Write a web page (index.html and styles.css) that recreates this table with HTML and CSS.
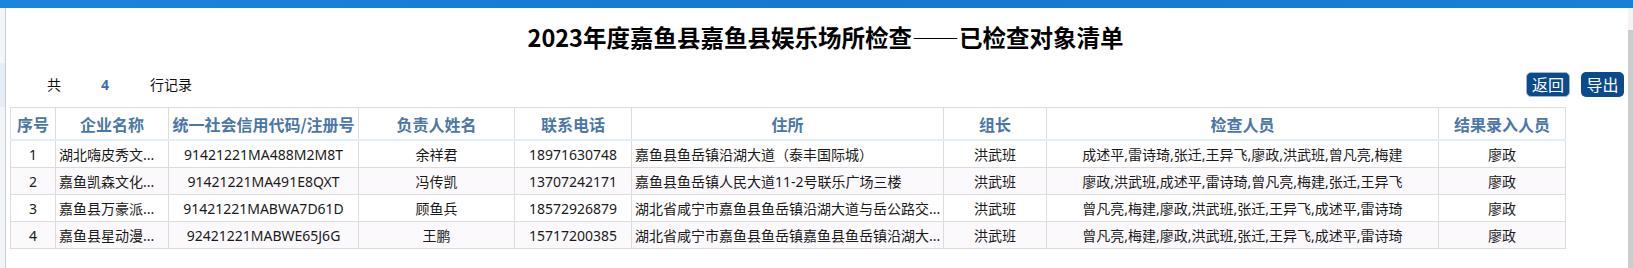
FILE: index.html
```html
<!DOCTYPE html>
<html lang="zh-CN">
<head>
<meta charset="utf-8">
<title>已检查对象清单</title>
<link rel="stylesheet" href="styles.css">
</head>
<body>
<div class="topbar"></div>
<div class="frame">
  <div class="leftrail"><div class="rail-hl"></div></div>
  <div class="main">
    <h1 class="title">2023年度嘉鱼县嘉鱼县娱乐场所检查——已检查对象清单</h1>
    <div class="toolbar">
      <div class="count"><span class="c1">共</span><span class="num">4</span><span class="c2">行记录</span></div>
      <div class="actions"><button class="btn btn-focus">返回</button><button class="btn">导出</button></div>
    </div>
    <table class="grid">
      <colgroup>
        <col class="w-no"><col class="w-name"><col class="w-code"><col class="w-person"><col class="w-tel"><col class="w-addr"><col class="w-lead"><col class="w-insp"><col class="w-rec">
      </colgroup>
      <thead>
        <tr><th>序号</th><th>企业名称</th><th>统一社会信用代码/注册号</th><th>负责人姓名</th><th>联系电话</th><th>住所</th><th>组长</th><th>检查人员</th><th>结果录入人员</th></tr>
      </thead>
      <tbody>
        <tr><td>1</td><td class="left">湖北嗨皮秀文...</td><td>91421221MA488M2M8T</td><td>余祥君</td><td>18971630748</td><td class="left">嘉鱼县鱼岳镇沿湖大道（泰丰国际城）</td><td>洪武班</td><td>成述平,雷诗琦,张迁,王异飞,廖政,洪武班,曾凡亮,梅建</td><td>廖政</td></tr>
        <tr class="alt"><td>2</td><td class="left">嘉鱼凯森文化...</td><td>91421221MA491E8QXT</td><td>冯传凯</td><td>13707242171</td><td class="left">嘉鱼县鱼岳镇人民大道11-2号联乐广场三楼</td><td>洪武班</td><td>廖政,洪武班,成述平,雷诗琦,曾凡亮,梅建,张迁,王异飞</td><td>廖政</td></tr>
        <tr><td>3</td><td class="left">嘉鱼县万豪派...</td><td>91421221MABWA7D61D</td><td>顾鱼兵</td><td>18572926879</td><td class="left">湖北省咸宁市嘉鱼县鱼岳镇沿湖大道与岳公路交...</td><td>洪武班</td><td>曾凡亮,梅建,廖政,洪武班,张迁,王异飞,成述平,雷诗琦</td><td>廖政</td></tr>
        <tr class="alt"><td>4</td><td class="left">嘉鱼县星动漫...</td><td>92421221MABWE65J6G</td><td>王鹏</td><td>15717200385</td><td class="left">湖北省咸宁市嘉鱼县鱼岳镇嘉鱼县鱼岳镇沿湖大...</td><td>洪武班</td><td>曾凡亮,梅建,廖政,洪武班,张迁,王异飞,成述平,雷诗琦</td><td>廖政</td></tr>
      </tbody>
    </table>
  </div>
  <div class="scrollbar"><div class="sb-top"></div><div class="sb-thumb"></div></div>
</div>
</body>
</html>
```

FILE: styles.css
```css
html, body {
  margin: 0;
  padding: 0;
  background: #ffffff;
  overflow: hidden;
}
body {
  font-family: "Noto Sans", "Noto Sans CJK SC", sans-serif;
  color: #1f1f1f;
}
.topbar {
  height: 8px;
  background: linear-gradient(90deg, #1d84dc 0%, #1479cf 50%, #1a80d4 100%);
}
.frame {
  display: flex;
  height: 260px;
}
.leftrail {
  width: 5px;
  background: #f3f5f8;
  border-right: 1px solid #c6ccd5;
  display: flex;
  flex-direction: column;
}
.rail-hl {
  margin-top: 55px;
  height: 44px;
  background: #e5edf7;
}
.main {
  flex: 1;
  padding: 0 4px;
  min-width: 0;
}
.title {
  margin: 0;
  padding: 17px 0 23px 17px;
  height: 24px;
  line-height: 24px;
  font-size: 23.5px;
  font-weight: 700;
  text-align: center;
  color: #000000;
  font-family: "Noto Sans CJK SC", sans-serif;
}
.toolbar {
  display: flex;
  justify-content: space-between;
  align-items: flex-start;
  height: 35px;
}
.count {
  margin-top: 5px;
  font-size: 14px;
  line-height: 14px;
  font-family: "Noto Sans CJK SC", sans-serif;
  color: #111;
}
.c1 { margin-left: 37px; }
.num {
  margin-left: 40px;
  font-weight: 700;
  color: #3b6fb0;
  font-family: "Noto Sans", sans-serif;
}
.c2 { margin-left: 41px; }
.actions {
  display: flex;
  gap: 11px;
}
.btn {
  height: 25px;
  width: 43px;
  padding: 0;
  border: none;
  border-radius: 5px;
  background: #0b4a8d;
  color: #ffffff;
  font-size: 16px;
  line-height: 25px;
  font-family: "Noto Sans CJK SC", sans-serif;
}
.btn-focus {
  width: 44px;
  border: 1px solid #9fb5d1;
  line-height: 23px;
}
.grid {
  width: 1555px;
  table-layout: fixed;
  border-collapse: collapse;
  font-size: 14px;
}
.w-no { width: 45px; }
.w-name { width: 113px; }
.w-code { width: 190px; }
.w-person { width: 156px; }
.w-tel { width: 117px; }
.w-addr { width: 312px; }
.w-lead { width: 103px; }
.w-insp { width: 392px; }
.w-rec { width: 127px; }
.grid th {
  height: 31px;
  padding: 0;
  border: 1px solid #dcdcdc;
  border-bottom: 2px solid #e0edfa;
  font-size: 16px;
  font-weight: 700;
  color: #4b77a8;
  text-align: center;
  font-family: "Noto Sans CJK SC", sans-serif;
  white-space: nowrap;
  overflow: hidden;
}
.grid td {
  height: 26px;
  padding: 0 3px;
  border: 1px solid #dcdcdc;
  text-align: center;
  white-space: nowrap;
  overflow: hidden;
  color: #1a1a1a;
}
.grid td.left {
  text-align: left;
}
.grid tr.alt td {
  background: #fcf9fd;
}
.scrollbar {
  width: 5px;
  display: flex;
  flex-direction: column;
}
.sb-top {
  height: 22px;
  background: #f6f2f5;
}
.sb-thumb {
  flex: 1;
  background: #cdcdcd;
}
```
